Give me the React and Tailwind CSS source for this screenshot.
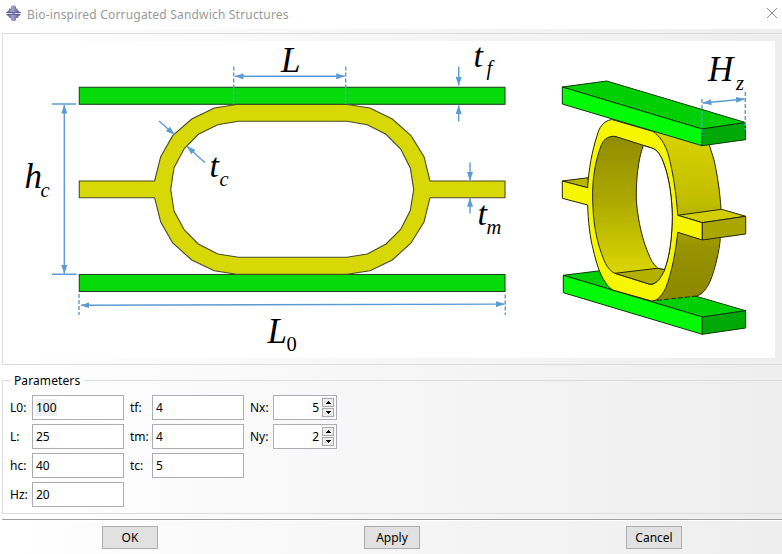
import { useState } from 'react';

const BLUE = '#5b9bd5';

const leftParams = [
  { label: 'L0:', value: '100', selected: true },
  { label: 'L:', value: '25' },
  { label: 'hc:', value: '40' },
  { label: 'Hz:', value: '20' }
];

const middleParams = [
  { label: 'tf:', value: '4' },
  { label: 'tm:', value: '4' },
  { label: 'tc:', value: '5' }
];

function AppIcon() {
  return (
    <svg width="15" height="16" viewBox="0 0 15 16" className="-mt-1">
      <defs>
        <linearGradient id="logo" x1="0" x2="1">
          <stop offset="0" stopColor="#5a5a96" />
          <stop offset="0.45" stopColor="#a2a2cc" />
          <stop offset="1" stopColor="#4a4a84" />
        </linearGradient>
      </defs>
      <path d="M5 1.500L6 0.500H9L10 1.500V3.500H11.500V5L14.500 7.500H0.500L3 5V3.500H5Z" fill="url(#logo)" />
      <path d="M0.500 9.500H14.500L12 12V13H10V15L9 16H6L5 15V13H3V12Z" fill="url(#logo)" />
      <path d="M0 7.500H15M0.500 9.500H14.500" stroke="#4c4c86" strokeWidth="0.8" />
      <path d="M1.500 8.500H13.500" stroke="#d4d4ea" strokeWidth="1" />
      <path d="M6 8.500H9" stroke="#9a9ac8" strokeWidth="1" />
    </svg>
  );
}

function TitleBar() {
  return (
    <header className="flex h-[29px] items-center bg-white pl-[6px] pr-[4px] text-[#999999]">
      <AppIcon />
      <h1 className="ml-[6px] whitespace-nowrap text-[12px] font-normal leading-4 tracking-[0.19px]">
        Bio-inspired Corrugated Sandwich Structures
      </h1>
      <button type="button" aria-label="Close" className="-mt-[3px] ml-auto">
        <svg width="12" height="12" viewBox="0 0 12 12" stroke="#8c8c8c" strokeWidth="1">
          <path d="M1 1l10 10M11 1L1 11" />
        </svg>
      </button>
    </header>
  );
}

function Arrow({ from, to, both }) {
  return (
    <line
      x1={from[0]}
      y1={from[1]}
      x2={to[0]}
      y2={to[1]}
      stroke={BLUE}
      strokeWidth="1.4"
      markerEnd="url(#head)"
      markerStart={both ? 'url(#head)' : undefined}
    />
  );
}

function Symbol({ x, y, main, sub, subX, subY, size = 35, upright }) {
  return (
    <g fontFamily="'Liberation Serif', serif" fontStyle="italic" fill="#000">
      <text x={x} y={y} fontSize={size}>{main}</text>
      {sub && (
        <text x={subX} y={subY} fontSize="20.5" fontStyle={upright ? 'normal' : 'italic'}>{sub}</text>
      )}
    </g>
  );
}

function FrontView() {
  return (
    <g stroke="#4a4a22" strokeWidth="1.1">
      <rect x="79.300" y="87.300" width="425.700" height="17" fill="#06da08" stroke="#1d4a1d" />
      <rect x="79.300" y="274.500" width="425.700" height="17" fill="#06da08" stroke="#1d4a1d" />
      <path
        fill="#d8d806"
        fillRule="evenodd"
        d="M236.500 104.500L214.300 108L191.700 119L172.700 135.700L160.700 156.700L154.600 181H79.300V197.700H154.600L160.700 222L172.700 243L191.700 260L214.300 270.700L236.500 274.300H347L370 270.700L392.300 260L411 243L424 222L430 197.700H505V181H430L424 156.700L411 135.700L392.300 119L370 108L347 104.500Z
           M238.500 121.300H347L367.300 124.700L386 134.300L400.700 149L410.300 168L413.700 189.300L410.300 210.500L400.700 229.500L386 244L367.300 254L347 257.300H238.500L217.700 254L198.300 244L184.300 230L174 211L170.700 189.300L174 167.700L184.300 148.500L198.300 134.300L217.700 124.700Z"
      />
    </g>
  );
}

function PerspectiveView() {
  return (
    <g stroke="#262600" strokeWidth="1" strokeLinejoin="round">
      {/* lower plate */}
      <g stroke="#0a3a0a">
        <path fill="#00cf04" d="M563.300 275.300L606 270L745.700 310.700L702.300 317Z" />
        <path fill="#00fa08" d="M563.300 275.300L702.300 317V334.300L563.300 292.700Z" />
        <path fill="#00a808" d="M702.300 317L745.700 310.700V328L702.300 334.300Z" />
      </g>

      {/* outer wall of the ring */}
      <path
        fill="url(#outer)"
        stroke="none"
        d="M640 125L709 145L714 160L719.300 186.700L721 209.300L720.300 238.300L716.700 260L710 281.700L702.700 293.300L696.700 296L651.700 301L640 290L665 240L665 150Z"
      />
      <path fill="none" d="M709.300 145L714 160C717 173 720 192 721 209.300M720.300 238.300C719.500 250 715.500 268 710 281.700C707 288 703 294 696.700 296" />
      <path fill="none" strokeDasharray="5 2" d="M696.700 296L651.700 301" />

      {/* front face of the ring with the left stub */}
      <path fill="#b8b400" d="M562.300 181L588.300 177.700V188Z" />
      <path
        fill="#f6f600"
        d="M611.700 119.500C603 121 599 128 597.300 135C592 151 588.500 170 587.700 187.700L562.300 181V198.300L587.700 205C588 220 590 238 593.300 250C596 262 600 275 605 281.700C608 287 612 290 615 290.700L651.700 301C658 301 663 294 666 287.300C672 272 676 250 677.700 232.300V215.300C676.500 195 673 172 668.300 154.300C665 144 660 136 652.700 131.300Z"
      />
      <path
        fill="url(#inner)"
        d="M615 136.300C607 136 603 140 600.700 146.700C595 162 592 181 592.700 200C593 220 596 239 601.700 254C605 264 609 271 615 273.300L650 284.300C656 285 660 278 664 270.700C670 256 672 236 672.300 216.700C672 197 669 178 664.300 165C661 155 657 149.500 651.700 148Z"
      />
      <path fill="#b4b000" d="M615 273.300L657 268.300L665 269.300C661 277 658 284 650 284.300Z" />
      <path
        fill="#fff"
        d="M643.300 145.500C638 160 636 180 636.300 200C638 222 643 242 649 255C651 261 655 266 658 268.300L664.500 269.500C670 256 672 236 672.300 216.700C672 197 669 178 664.300 165C661 155 657 149.500 651.700 148Z"
      />

      {/* right stub */}
      <path fill="#d2ce00" d="M677.700 215.300L721.700 209.300L745.700 216.300L702.300 222.700Z" />
      <path fill="#f6f600" stroke="none" d="M674 214.500L677.700 215.300L702.300 222.700V240L677.700 232.300L674 231Z" />
      <path fill="none" d="M677.700 215.300L702.300 222.700V240L677.700 232.300" />
      <path fill="#aaa600" d="M702.300 222.700L745.700 216.300V234L702.300 240Z" />

      {/* upper plate */}
      <g stroke="#0a3a0a">
        <path fill="#00cf04" d="M562.300 87L606.700 81L745.500 122.500L702 129Z" />
        <path fill="#00fa08" d="M562.300 87L702 129V145.700L562.300 104Z" />
        <path fill="#00a808" d="M702 129L745.500 122.500V139.700L702 145.700Z" />
      </g>
    </g>
  );
}

function Dimensions() {
  return (
    <g>
      <g stroke={BLUE} strokeWidth="1.4">
        <path d="M52 104H76M52 274.200H76.500" />
        <path strokeDasharray="4 2" d="M233.700 66.500V104M345.700 66.500V104M79 294V315M505.300 294.500V315M702 99V136M745.300 92V130" />
      </g>
      <Arrow from={[235, 76.3]} to={[344.7, 76.3]} both />
      <Arrow from={[64.3, 105]} to={[64.3, 273.5]} both />
      <Arrow from={[81, 305.3]} to={[504.5, 304.1]} both />
      <Arrow from={[159, 121]} to={[174.3, 134.5]} />
      <Arrow from={[205, 162.7]} to={[187, 146.3]} />
      <Arrow from={[458.7, 66.5]} to={[458.7, 85.5]} />
      <Arrow from={[458.7, 121.5]} to={[458.7, 105.5]} />
      <Arrow from={[470, 162.5]} to={[470, 180.5]} />
      <Arrow from={[470, 213.5]} to={[470, 198.2]} />
      <Arrow from={[703, 103]} to={[744.5, 99]} both />
      <Symbol x={281} y={71.5} main="L" />
      <Symbol x={473.5} y={66.5} main="t" sub="f" subX={486.5} subY={75} size={34} />
      <Symbol x={24.5} y={188} main="h" sub="c" subX={40.5} subY={197} />
      <Symbol x={209.5} y={177} main="t" sub="c" subX={219.5} subY={186} size={34} />
      <Symbol x={477.5} y={224.5} main="t" sub="m" subX={486.5} subY={233.5} size={34} />
      <Symbol x={267.5} y={343} main="L" sub="0" subX={286.5} subY={351} upright />
      <Symbol x={708} y={81} main="H" sub="z" subX={736} subY={90} />
    </g>
  );
}

function Diagram() {
  return (
    <svg width="765" height="317" viewBox="10 41 765 317" className="block shrink-0 overflow-visible bg-white">
      <defs>
        <marker id="head" viewBox="0 0 9 6" refX="8.500" refY="3" markerWidth="9" markerHeight="6" markerUnits="userSpaceOnUse" orient="auto-start-reverse">
          <path d="M0 0L9 3L0 6Z" fill={BLUE} />
        </marker>
        <linearGradient id="outer" x1="0" y1="0" x2="0" y2="1">
          <stop offset="0" stopColor="#dad600" />
          <stop offset="0.45" stopColor="#c0bc00" />
          <stop offset="0.7" stopColor="#969200" />
          <stop offset="1" stopColor="#8c8800" />
        </linearGradient>
        <linearGradient id="inner" x1="0" y1="0" x2="0" y2="1">
          <stop offset="0" stopColor="#908c00" />
          <stop offset="0.4" stopColor="#aaa600" />
          <stop offset="0.9" stopColor="#d8d400" />
        </linearGradient>
      </defs>
      <FrontView />
      <PerspectiveView />
      <Dimensions />
    </svg>
  );
}

function Field({ label, value, selected }) {
  return (
    <label className="flex h-[25px] items-center">
      <span className="w-[22px] whitespace-nowrap">{label}</span>
      <span className="flex h-[25px] w-[92px] items-center border border-[#abadb3] bg-white pl-[3px]">
        <span className={selected ? 'bg-[#eeeeee] leading-[17px]' : 'leading-[17px]'}>{value}</span>
      </span>
    </label>
  );
}

function SpinButton({ up, onClick }) {
  return (
    <button
      type="button"
      aria-label={up ? 'Increase' : 'Decrease'}
      onClick={onClick}
      className="flex h-[9px] w-[12px] items-center justify-center border border-[#acacac] bg-[#ececec]"
    >
      <svg width="5" height="3" viewBox="0 0 5 3" shapeRendering="crispEdges">
        <path d={up ? 'M2 0h1v1h1v1h1v1H0V2h1V1h1z' : 'M0 0h5v1H4v1H3v1H2V2H1V1H0z'} />
      </svg>
    </button>
  );
}

function Spinner({ label, initial }) {
  const [value, setValue] = useState(initial);

  return (
    <div className="flex h-[25px] items-center">
      <span className="w-[23px] whitespace-nowrap">{label}</span>
      <div className="flex h-[25px] w-[64px] items-center justify-end border border-[#abadb3] bg-white pr-px">
        <span className="mr-[2px]">{value}</span>
        <div className="flex flex-col gap-px bg-[#f3f3f3] p-px">
          <SpinButton up onClick={() => setValue(value + 1)} />
          <SpinButton onClick={() => setValue(Math.max(1, value - 1))} />
        </div>
      </div>
    </div>
  );
}

function DialogButton({ children }) {
  return (
    <button type="button" className="h-[23px] w-[56px] border border-[#adadad] bg-[#e1e1e1] leading-[21px]">
      {children}
    </button>
  );
}

export default function App() {
  return (
    <div className="h-[554px] w-[782px] overflow-hidden bg-white font-['Noto_Sans',sans-serif] text-[12px] text-black">
      <TitleBar />
      <main className="flex h-[525px] flex-col bg-linear-to-r from-white via-[#f6f6f6] to-[#eeeeee] pt-1">
        <section className="ml-[2px] h-[332px] w-[790px] border border-[#dcdcdc] pl-[7px] pt-[7px]">
          <Diagram />
        </section>

        <fieldset className="ml-[2px] mt-[7px] h-[142px] w-[790px] border border-[#dcdcdc] pl-[7px]">
          <legend className="ml-0 px-1 text-[12px] leading-[17px] tracking-[0.1px]">Parameters</legend>
          <div className="mt-[6px] flex gap-[6px]">
            <div className="flex flex-col gap-1">
              {leftParams.map((param) => (
                <Field key={param.label} {...param} />
              ))}
            </div>
            <div className="flex flex-col gap-1">
              {middleParams.map((param) => (
                <Field key={param.label} {...param} />
              ))}
            </div>
            <div className="flex flex-col gap-1">
              <Spinner label="Nx:" initial={5} />
              <Spinner label="Ny:" initial={2} />
            </div>
          </div>
        </fieldset>

        <div className="ml-[2px] mt-[5px] h-[2px] border-b border-t border-b-white border-t-[#a0a0a0]" />
        <footer className="-ml-px mt-[5px] grid w-[786px] grid-cols-3 justify-items-center">
          <DialogButton>OK</DialogButton>
          <DialogButton>Apply</DialogButton>
          <DialogButton>Cancel</DialogButton>
        </footer>
      </main>
    </div>
  );
}
